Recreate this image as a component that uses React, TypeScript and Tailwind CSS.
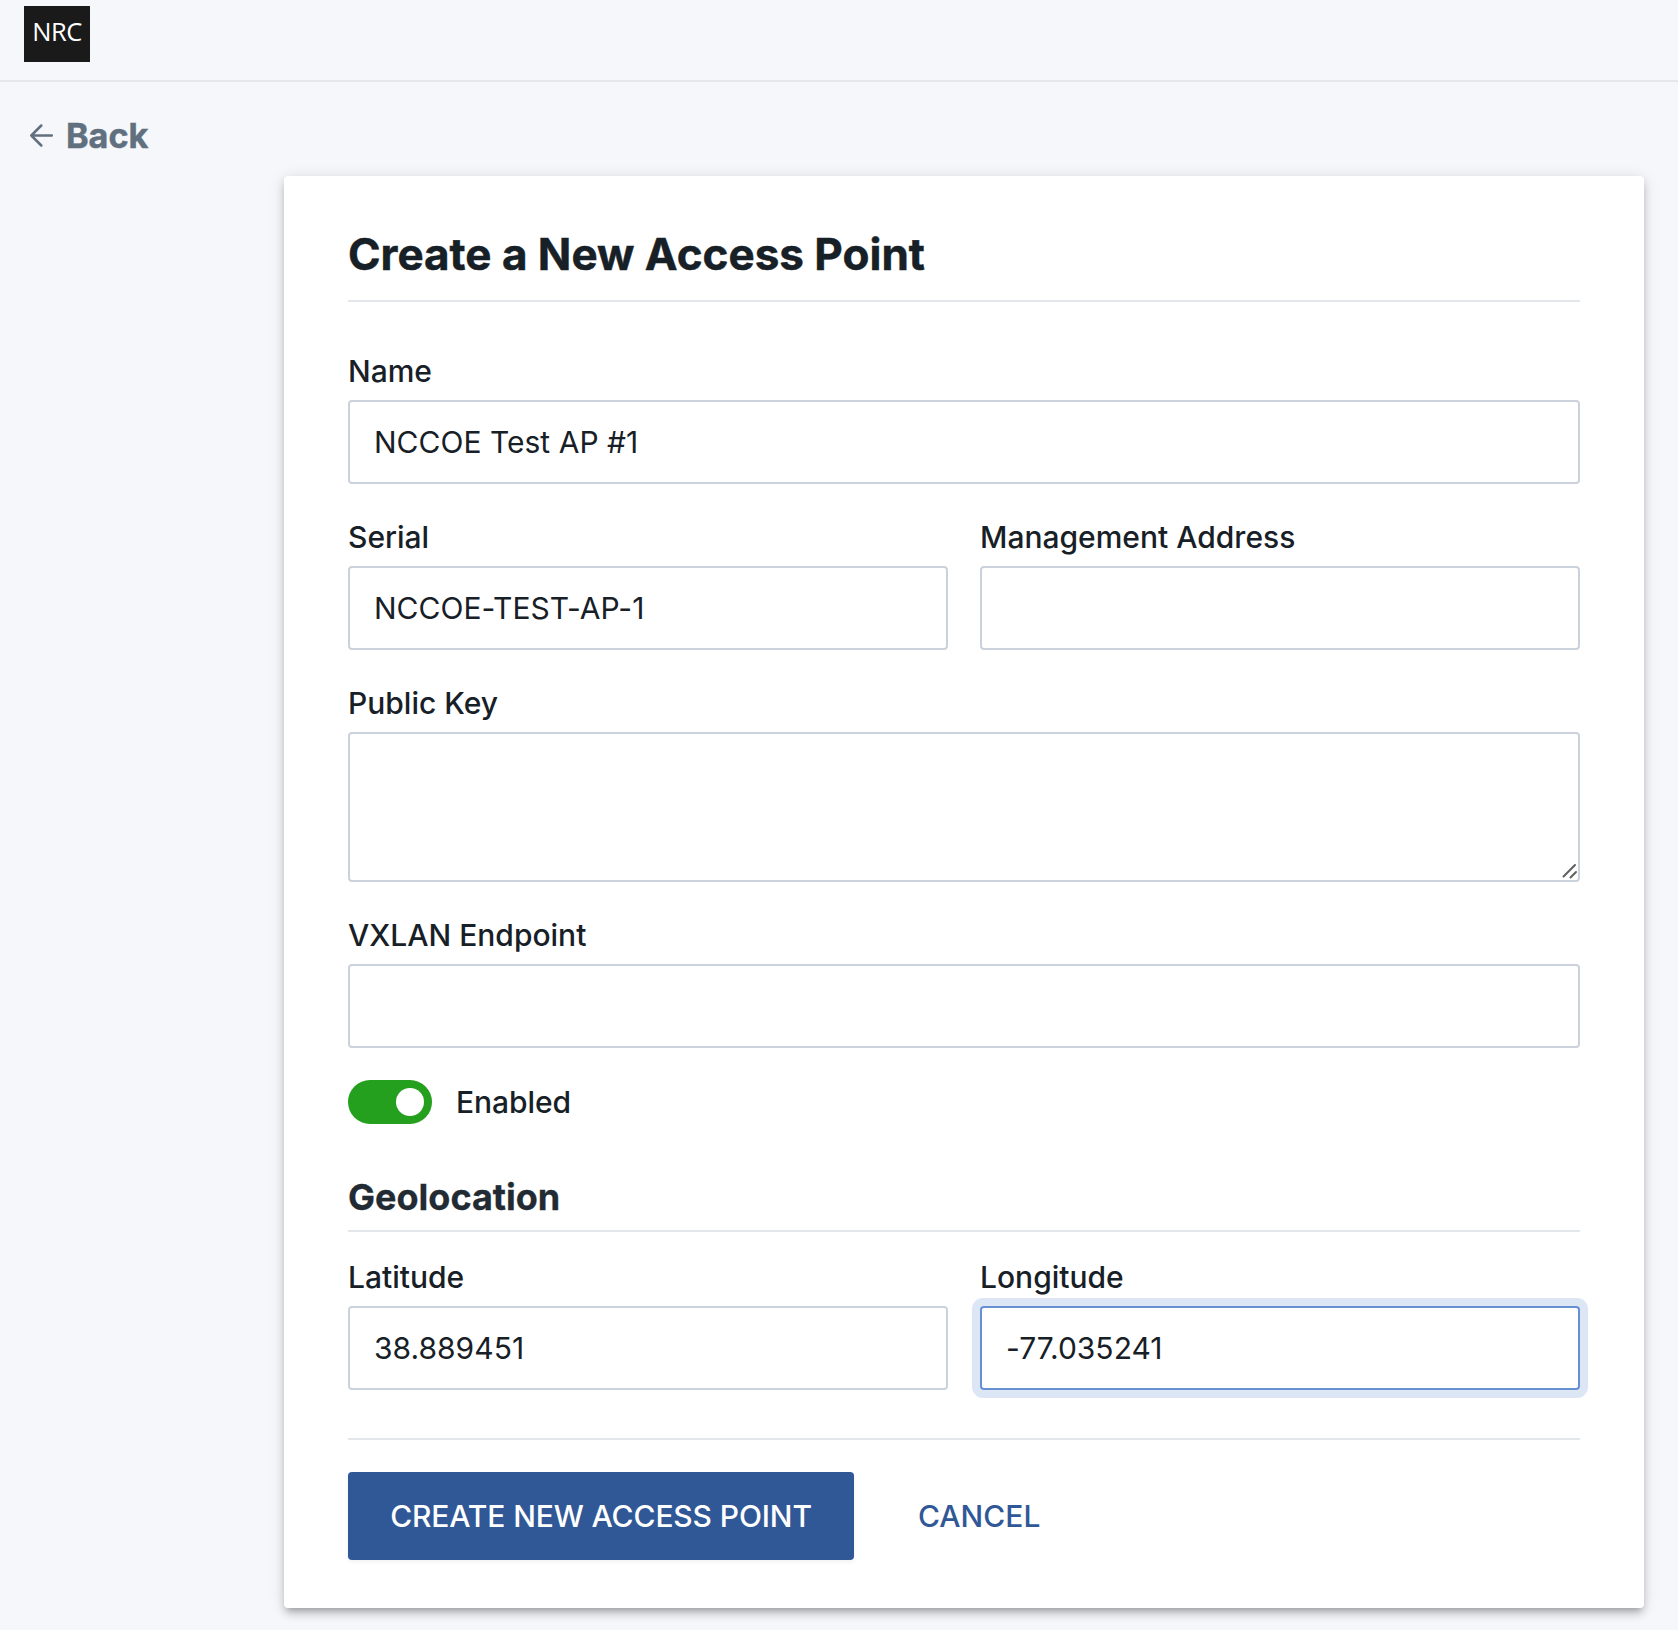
import React from "react";

type FieldProps = { label: string; value?: string; focused?: boolean };

const inputBase =
  "block h-[84px] w-full rounded-[4px] border-2 bg-white px-6 text-[30px] tracking-[0.02px] text-[#172026] outline-none";

function Label({ children }: { children: React.ReactNode }) {
  return <span className="mb-2 block text-[30px] font-medium leading-[42px]">{children}</span>;
}

function Field({ label, value = "", focused = false }: FieldProps) {
  return (
    <label className="block min-w-0 flex-1">
      <Label>{label}</Label>
      <input
        type="text"
        defaultValue={value}
        className={
          focused
            ? `${inputBase} border-[#6690d2] shadow-[0_0_0_8px_#dce6f5]`
            : `${inputBase} border-[#cbd2dc]`
        }
      />
    </label>
  );
}

function KeyField() {
  return (
    <label className="relative block">
      <Label>Public Key</Label>
      <textarea className="block h-[150px] w-full resize-none rounded-[4px] border-2 border-[#cbd2dc] bg-white px-6 py-4 text-[30px] outline-none" />
      <svg className="absolute bottom-[3px] right-[2px]" width="16" height="16" viewBox="0 0 16 16" stroke="#5f5f5f" strokeWidth="2" strokeLinecap="round">
        <path d="M1.5 13.5 13 2M8.500 14.500 14 9" />
      </svg>
    </label>
  );
}

export default function App() {
  return (
    <div className="min-h-[1630px] bg-[#f6f7fb] font-['Inter',sans-serif] text-[#172026]">
      <header className="h-[82px] border-b-2 border-[#e5e7eb] px-6 pt-1.5">
        <div className="flex h-14 w-[66px] items-center justify-center bg-[#1a1a1a] pb-[5px] font-['Open_Sans',sans-serif] text-[25.5px] tracking-[-0.5px] text-white">
          NRC
        </div>
      </header>
      <a className="flex h-[94px] items-center gap-[13px] pl-[29px] pt-[14px] text-[#61707f]">
        <svg className="-mt-[3px] shrink-0" width="24" height="24" viewBox="0 0 24 24" fill="none" stroke="currentColor" strokeWidth="2.5" strokeLinecap="round" strokeLinejoin="round">
          <path d="M22.800 12.500H2.300M12.300 2.500l-10 10 10 10" />
        </svg>
        <span className="text-[34.200px] font-bold [-webkit-text-stroke:0.5px_currentColor]">Back</span>
      </a>
      <main className="ml-[284px] h-[1432px] w-[1360px] rounded-[4px] bg-white px-16 shadow-[0_6px_6px_-4px_rgba(0,0,0,0.2),0_6px_8px_rgba(0,0,0,0.14),0_2px_16px_rgba(0,0,0,0.12)]">
        <h1 className="h-[126px] border-b-2 border-[#e3e7eb] pt-[51px] text-[44px] font-bold leading-[54px] [-webkit-text-stroke:0.5px_currentColor]">
          Create a New Access Point
        </h1>
        <form className="pt-12" onSubmit={(e) => e.preventDefault()}>
          <div className="flex flex-col gap-8">
            <Field label="Name" value="NCCOE Test AP #1" />
            <div className="flex gap-8">
              <Field label="Serial" value="NCCOE-TEST-AP-1" />
              <Field label="Management Address" />
            </div>
            <KeyField />
            <Field label="VXLAN Endpoint" />
            <div className="flex h-11 items-center gap-6">
              <span className="flex h-11 w-[84px] items-center justify-end rounded-full bg-[#249f1e] pr-2">
                <span className="size-7 rounded-full bg-white" />
              </span>
              <span className="text-[30px] font-medium tracking-[-0.05px]">Enabled</span>
            </div>
          </div>
          <h2 className="mt-[46px] h-[62px] border-b-2 border-[#e3e7eb] text-[36px] font-bold leading-[54px] text-[#222b33] [-webkit-text-stroke:0.3px_currentColor]">
            Geolocation
          </h2>
          <div className="mt-6 flex gap-8">
            <Field label="Latitude" value="38.889451" />
            <Field label="Longitude" value="-77.035241" focused />
          </div>
          <div className="mt-12 flex items-center border-t-2 border-[#e3e7eb] pt-8">
            <button className="h-[88px] w-[506px] rounded-[4px] bg-[#305896] text-[30px] font-medium tracking-[-0.12px] text-white shadow-[0_2px_4px_rgba(0,0,0,0.06)]">
              CREATE NEW ACCESS POINT
            </button>
            <button className="ml-16 text-[30px] font-medium text-[#305896]">CANCEL</button>
          </div>
        </form>
      </main>
    </div>
  );
}
